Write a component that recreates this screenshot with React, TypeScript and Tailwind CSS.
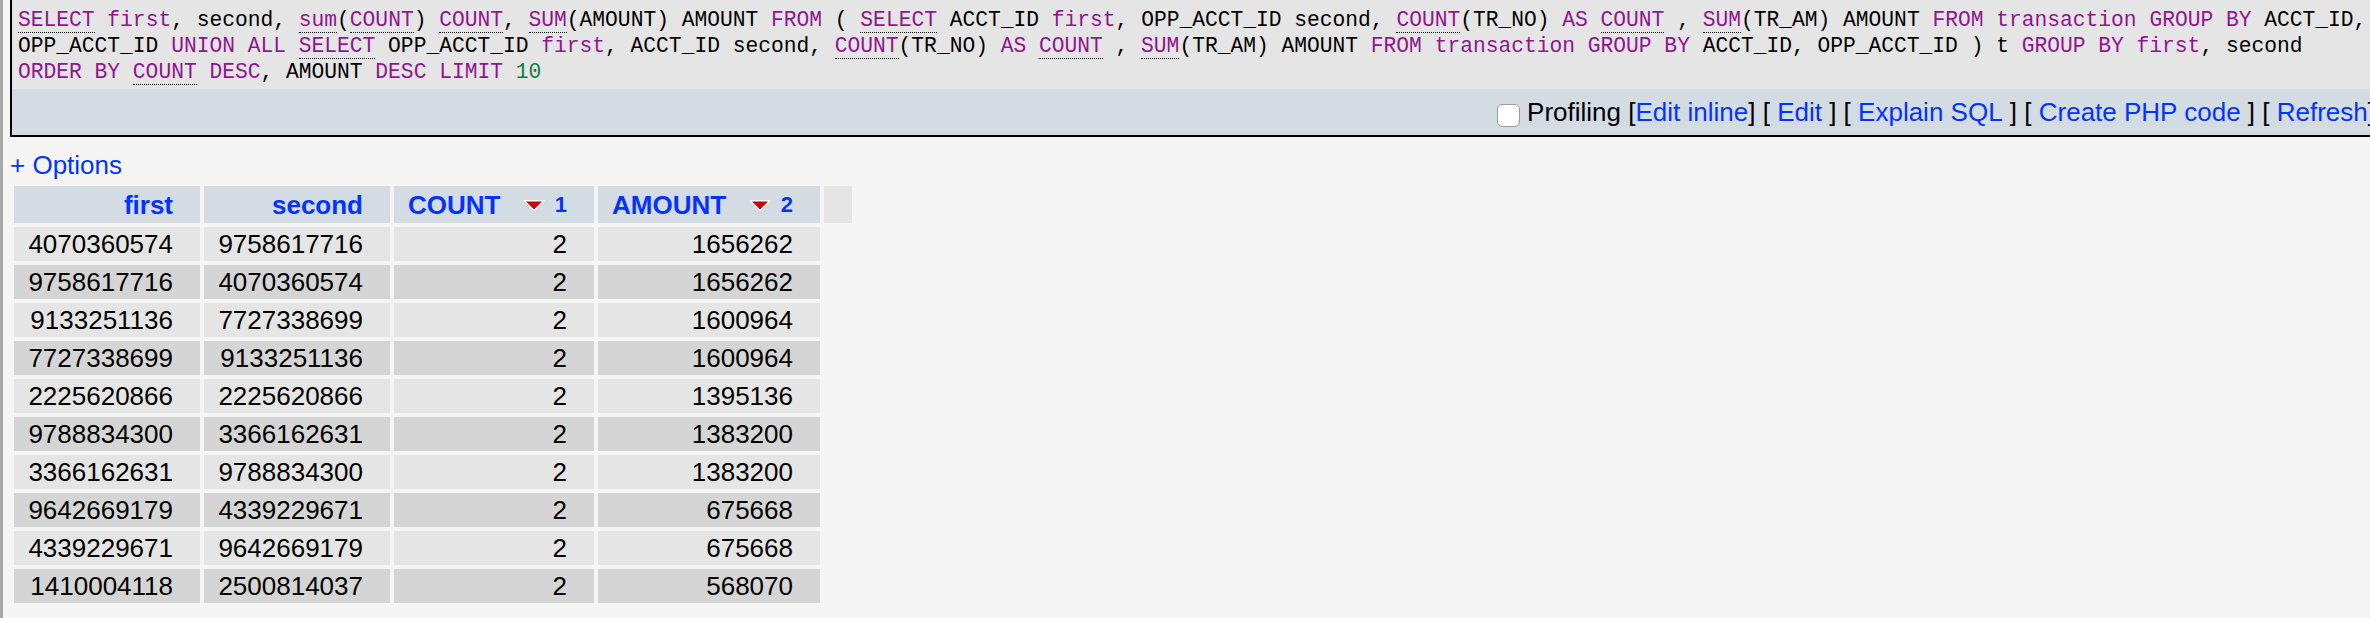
import React from "react";

type Tok = { t: string; k?: "kw" | "num"; u?: boolean };

const K = (t: string, u = false): Tok => ({ t, k: "kw", u });
const P = (t: string): Tok => ({ t });

const line1: Tok[] = [
  K("SELECT", true), P(" "), K("first"), P(", second, "), K("sum", true), P("("), K("COUNT", true), P(") "),
  K("COUNT", true), P(", "), K("SUM", true), P("(AMOUNT) AMOUNT "), K("FROM"), P(" ( "), K("SELECT", true),
  P(" ACCT_ID "), K("first"), P(", OPP_ACCT_ID second, "), K("COUNT", true), P("(TR_NO) "), K("AS"), P(" "),
  K("COUNT", true), P(" , "), K("SUM", true), P("(TR_AM) AMOUNT "), K("FROM"), P(" "), K("transaction"), P(" "),
  K("GROUP BY"), P(" ACCT_ID,"),
];
const line2: Tok[] = [
  P("OPP_ACCT_ID "), K("UNION ALL"), P(" "), K("SELECT", true), P(" OPP_ACCT_ID "), K("first"),
  P(", ACCT_ID second, "), K("COUNT", true), P("(TR_NO) "), K("AS"), P(" "), K("COUNT", true), P(" , "),
  K("SUM", true), P("(TR_AM) AMOUNT "), K("FROM"), P(" "), K("transaction"), P(" "), K("GROUP BY"),
  P(" ACCT_ID, OPP_ACCT_ID ) t "), K("GROUP BY"), P(" "), K("first"), P(", second"),
];
const line3: Tok[] = [
  K("ORDER BY"), P(" "), K("COUNT", true), P(" "), K("DESC"), P(", AMOUNT "), K("DESC"), P(" "), K("LIMIT"), P(" "),
  { t: "10", k: "num" },
];

function SqlLine({ toks }: { toks: Tok[] }) {
  return (
    <div className="whitespace-pre">
      {toks.map((tk, i) => {
        const color = tk.k === "kw" ? "text-[#8f168f]" : tk.k === "num" ? "text-[#157a3e]" : "text-black";
        return (
          <span key={i} className={`${color} ${tk.u ? "border-b border-dotted border-black" : ""}`}>
            {tk.t}
          </span>
        );
      })}
    </div>
  );
}

const rows: string[][] = [
  ["4070360574", "9758617716", "2", "1656262"],
  ["9758617716", "4070360574", "2", "1656262"],
  ["9133251136", "7727338699", "2", "1600964"],
  ["7727338699", "9133251136", "2", "1600964"],
  ["2225620866", "2225620866", "2", "1395136"],
  ["9788834300", "3366162631", "2", "1383200"],
  ["3366162631", "9788834300", "2", "1383200"],
  ["9642669179", "4339229671", "2", "675668"],
  ["4339229671", "9642669179", "2", "675668"],
  ["1410004118", "2500814037", "2", "568070"],
];

function SortArrow() {
  return (
    <svg width="22" height="11" viewBox="0 0 22 11" className="block mt-[2px]">
      <polygon points="0,0 22,0 11,11" fill="#ffffff" />
      <polygon points="3,1.5 19,1.5 11,9.6" fill="#cc0011" />
    </svg>
  );
}

function SortHeader({ label, n }: { label: string; n: string }) {
  return (
    <div className="flex items-center justify-between pl-[14px] pr-[27px]">
      <span>{label}</span>
      <span className="flex items-center">
        <SortArrow />
        <span className="ml-[10px] text-[22px] leading-none">{n}</span>
      </span>
    </div>
  );
}

export default function App() {
  return (
    <div className="w-[2370px] h-[618px] overflow-hidden bg-[#f5f5f5] flex font-['Liberation_Sans',Arial,sans-serif] text-[26px] text-black">
      <div className="w-[3px] shrink-0 bg-[#a9a9a9]" />
      <div className="flex-1 min-w-0 pl-[7px] flex flex-col">
        {/* SQL box */}
        <div className="border-l-2 border-b-2 border-black">
          <div className="bg-[#e5e5e5] h-[89px] pt-[8px] pl-[6px] font-['Liberation_Mono',monospace] text-[21.28px] leading-[25.8px]">
            <SqlLine toks={line1} />
            <SqlLine toks={line2} />
            <SqlLine toks={line3} />
          </div>
          <div className="bg-[#d3dce3] h-[46px] flex items-center justify-end whitespace-pre leading-[30px] overflow-hidden">
            <div className="flex items-center -mr-[5px]">
              <span className="mt-[7px] mr-[7px] w-[23px] h-[23px] rounded-[5px] border border-[#9a9a9a] bg-white shrink-0" />
              <span>Profiling [</span>
              <span className="text-[#0433ff]">Edit inline</span>
              <span>] [ </span>
              <span className="text-[#0433ff]">Edit</span>
              <span> ] [ </span>
              <span className="text-[#0433ff]">Explain SQL</span>
              <span> ] [ </span>
              <span className="text-[#0433ff]">Create PHP code</span>
              <span> ] [ </span>
              <span className="text-[#0433ff]">Refresh</span>
              <span>]</span>
            </div>
          </div>
        </div>

        <div className="mt-[13px] leading-[30px] text-[#0433ff]">+ Options</div>

        <table className="mt-[2px] border-separate border-spacing-[4px] table-fixed w-[846px] leading-[30px]">
          <thead>
            <tr className="bg-[#d3dce3] text-[#0433ff] font-bold">
              <th className="w-[186px] h-[37px] p-0 pr-[27px] text-right bg-[#d3dce3]">first</th>
              <th className="w-[186px] h-[37px] p-0 pr-[27px] text-right bg-[#d3dce3]">second</th>
              <th className="w-[200px] h-[37px] p-0 text-left bg-[#d3dce3]">
                <SortHeader label="COUNT" n="1" />
              </th>
              <th className="w-[222px] h-[37px] p-0 text-left bg-[#d3dce3]">
                <SortHeader label="AMOUNT" n="2" />
              </th>
              <th className="w-[28px] h-[37px] p-0 bg-[#e5e5e5]" />
            </tr>
          </thead>
          <tbody>
            {rows.map((r, i) => (
              <tr key={i} className={i % 2 === 0 ? "bg-[#e5e5e5]" : "bg-[#d5d5d5]"}>
                {r.map((c, j) => (
                  <td key={j} className={`h-[34px] p-0 pr-[27px] text-right ${i % 2 === 0 ? "bg-[#e5e5e5]" : "bg-[#d5d5d5]"}`}>
                    {c}
                  </td>
                ))}
              </tr>
            ))}
          </tbody>
        </table>
      </div>
    </div>
  );
}
